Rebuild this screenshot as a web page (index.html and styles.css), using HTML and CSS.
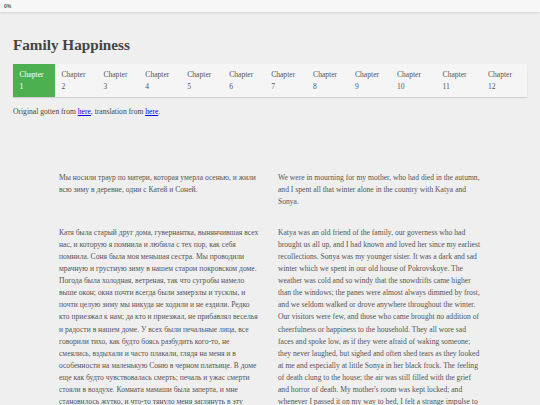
FILE: index.html
```html
<!DOCTYPE html>
<html lang="en">
<head>
<meta charset="utf-8">
<title>Family Happiness</title>
<link rel="stylesheet" href="styles.css">
</head>
<body>
<div class="topbar"><span class="progress">0%</span></div>
<div class="page">
  <h1 class="title">Family Happiness</h1>
  <nav class="chapters">
    <a class="chapter active">Chapter 1</a>
    <a class="chapter">Chapter 2</a>
    <a class="chapter">Chapter 3</a>
    <a class="chapter">Chapter 4</a>
    <a class="chapter">Chapter 5</a>
    <a class="chapter">Chapter 6</a>
    <a class="chapter">Chapter 7</a>
    <a class="chapter">Chapter 8</a>
    <a class="chapter">Chapter 9</a>
    <a class="chapter">Chapter 10</a>
    <a class="chapter">Chapter 11</a>
    <a class="chapter">Chapter 12</a>
  </nav>
  <p class="source">Original gotten from <a class="link" href="#">here</a>, translation from <a class="link" href="#">here</a>.</p>
  <div class="text">
    <p class="para">Мы носили траур по матери, которая умерла осенью, и жили всю зиму в деревне, одни с Катей и Соней.</p>
    <p class="para">We were in mourning for my mother, who had died in the autumn, and I spent all that winter alone in the country with Katya and Sonya.</p>
    <p class="para">Катя была старый друг дома, гувернантка, вынянчившая всех нас, и которую я помнила и любила с тех пор, как себя помнила. Соня была моя меньшая сестра. Мы проводили мрачную и грустную зиму в нашем старом покровском доме. Погода была холодная, ветреная, так что сугробы намело выше окон; окна почти всегда были замерзлы и тусклы, и почти целую зиму мы никуда не ходили и не ездили. Редко кто приезжал к нам; да кто и приезжал, не прибавлял веселья и радости в нашем доме. У всех были печальные лица, все говорили тихо, как будто боясь разбудить кого-то, не смеялись, вздыхали и часто плакали, глядя на меня и в особенности на маленькую Соню в черном платьице. В доме еще как будто чувствовалась смерть; печаль и ужас смерти стояли в воздухе. Комната мамаши была заперта, и мне становилось жутко, и что-то тянуло меня заглянуть в эту холодную и пустую комнату, когда я проходила спать.</p>
    <p class="para">Katya was an old friend of the family, our governess who had brought us all up, and I had known and loved her since my earliest recollections. Sonya was my younger sister. It was a dark and sad winter which we spent in our old house of Pokrovskoye. The weather was cold and so windy that the snowdrifts came higher than the windows; the panes were almost always dimmed by frost, and we seldom walked or drove anywhere throughout the winter. Our visitors were few, and those who came brought no addition of cheerfulness or happiness to the household. They all wore sad faces and spoke low, as if they were afraid of waking someone; they never laughed, but sighed and often shed tears as they looked at me and especially at little Sonya in her black frock. The feeling of death clung to the house; the air was still filled with the grief and horror of death. My mother's room was kept locked; and whenever I passed it on my way to bed, I felt a strange impulse to look into that cold empty room.</p>
  </div>
</div>
</body>
</html>
```

FILE: styles.css
```css
html, body {
  margin: 0;
  padding: 0;
}
body {
  background: #efefef;
  font-family: "Liberation Serif", "Times New Roman", serif;
  font-size: 7.6px;
  color: #555;
}
.topbar {
  height: 12px;
  background: #f7f7f7;
  box-shadow: 0 1px 2px rgba(0, 0, 0, 0.12);
  display: flex;
  align-items: center;
  padding-left: 4px;
}
.progress {
  font-family: "Liberation Sans", Arial, sans-serif;
  font-size: 5px;
  font-weight: bold;
  color: #555;
}
.page {
  padding: 0 13px;
}
.title {
  margin: 24px 0 10px;
  font-size: 15.2px;
  line-height: 17.5px;
  font-weight: bold;
  color: #444;
}
.chapters {
  display: flex;
  width: 514px;
  background: #f5f5f5;
  box-shadow: 0 1px 1px rgba(0, 0, 0, 0.12);
}
.chapter {
  padding: 5px 6.5px 4px;
  line-height: 12px;
  color: #555;
  text-decoration: none;
}
.chapter.active {
  background: #4caf50;
  color: #fff;
}
.source {
  margin: 9px 0 0;
  line-height: 12px;
  color: #444;
}
.link {
  color: #0000ee;
}
.text {
  display: grid;
  grid-template-columns: 203px 203px;
  column-gap: 16px;
  row-gap: 19px;
  margin-top: 54px;
  padding-left: 46px;
}
.para {
  margin: 0;
  line-height: 12.1px;
  color: #555;
}
```
